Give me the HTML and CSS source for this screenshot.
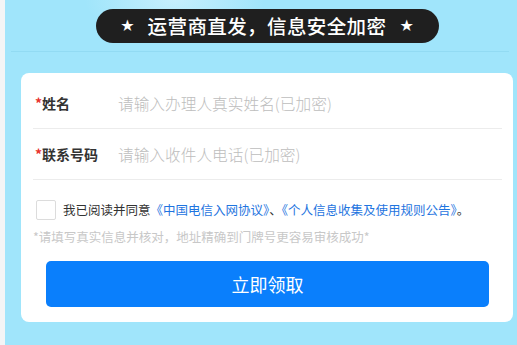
FILE: index.html
```html
<!DOCTYPE html>
<html lang="zh-CN">
<head>
<meta charset="utf-8">
<title>信息填写</title>
<link rel="stylesheet" href="styles.css">
</head>
<body>
<div class="page">
  <div class="main">
    <div class="header">
      <div class="pill"><span class="star">★</span><span class="pill-text">运营商直发，信息安全加密</span><span class="star">★</span></div>
    </div>
    <div class="divider"></div>
    <div class="card">
      <div class="row">
        <div class="label"><span class="req">*</span>姓名</div>
        <div class="ph">请输入办理人真实姓名(已加密)</div>
      </div>
      <div class="row">
        <div class="label"><span class="req">*</span>联系号码</div>
        <div class="ph">请输入收件人电话(已加密)</div>
      </div>
      <div class="agree">
        <span class="box"></span>
        <span class="agree-text">我已阅读并同意<a class="link">《中国电信入网协议》</a>、<a class="link">《个人信息收集及使用规则公告》</a>。</span>
      </div>
      <div class="note">*请填写真实信息并核对，地址精确到门牌号更容易审核成功*</div>
      <div class="btn">立即领取</div>
    </div>
  </div>
</div>
</body>
</html>
```

FILE: styles.css
```css
html, body {
  margin: 0;
  padding: 0;
}
body {
  font-family: "Noto Sans CJK SC", "Noto Sans", sans-serif;
  width: 517px;
  height: 345px;
  overflow: hidden;
}
.page {
  background: #f3f5f6;
  padding-left: 5px;
  height: 345px;
}
.main {
  height: 345px;
  background: radial-gradient(ellipse 90px 40px at 170px 0px, #c6effd 0%, rgba(160,229,251,0) 100%), #a0e5fb;
  padding: 9px 4px 0 16px;
  box-sizing: border-box;
}
.header {
  display: flex;
  justify-content: center;
}
.pill {
  width: 343px;
  height: 34px;
  box-sizing: border-box;
  border-radius: 17px;
  background: #1f1f1f;
  color: #fff;
  display: flex;
  align-items: center;
  justify-content: center;
  gap: 13px;
}
.star {
  font-family: "DejaVu Sans", sans-serif;
  font-size: 16px;
  line-height: 1;
}
.pill-text {
  font-size: 19.5px;
  font-weight: 500;
  line-height: 1;
  letter-spacing: 0.4px;
}
.divider {
  height: 1px;
  background: rgba(120, 200, 230, 0.35);
  margin: 8px 4px 0 -10px;
}
.card {
  margin-top: 21px;
  background: #fff;
  border-radius: 8px;
  padding: 5px 11px 15px 12px;
  height: 249px;
  box-sizing: border-box;
}
.row {
  display: flex;
  align-items: center;
  height: 50px;
  border-bottom: 1px solid #ececec;
}
.label {
  width: 85px;
  padding-left: 2px;
  box-sizing: border-box;
  font-size: 14px;
  font-weight: 700;
  color: #333;
}
.req {
  color: #e8322e;
}
.ph {
  font-size: 15.7px;
  color: #bdbdbd;
  font-weight: 300;
}
.agree {
  display: flex;
  align-items: center;
  height: 20px;
  margin-top: 20px;
  padding-left: 3px;
}
.box {
  width: 20px;
  height: 20px;
  box-sizing: border-box;
  border: 1px solid #dcdcdc;
  border-radius: 2px;
  margin-right: 7px;
  flex: none;
}
.agree-text {
  font-size: 12.5px;
  line-height: 20px;
  color: #333;
  white-space: nowrap;
}
.link {
  color: #1f75e0;
}
.note {
  margin-top: 8px;
  font-size: 12.5px;
  line-height: 18px;
  color: #c8c8c8;
  white-space: nowrap;
}
.btn {
  margin: 15px 13px 0 13px;
  height: 46px;
  border-radius: 5px;
  background: #0a7ffc;
  color: #fff;
  font-size: 18px;
  display: flex;
  align-items: center;
  justify-content: center;
}
```
